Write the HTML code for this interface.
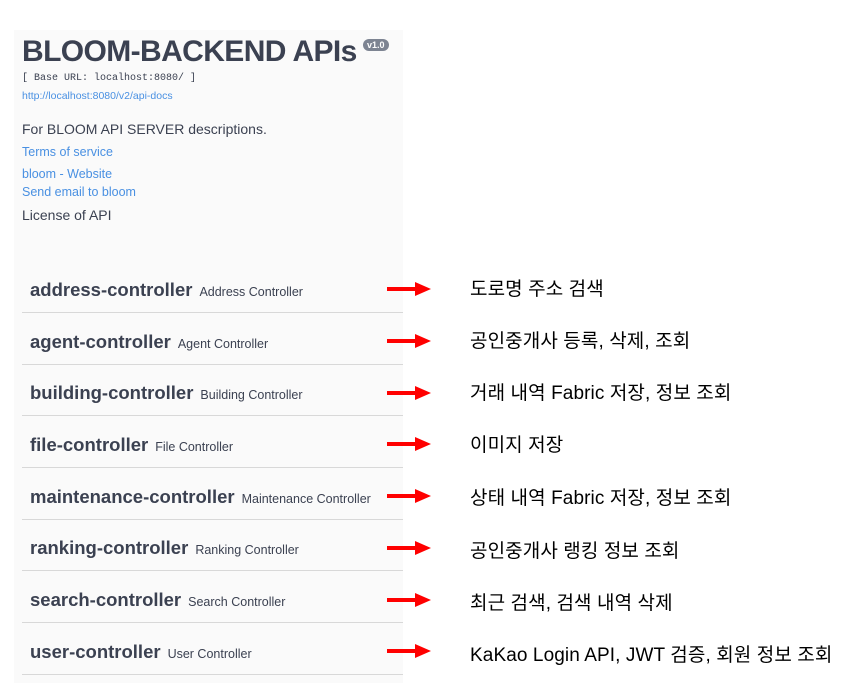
<!DOCTYPE html>
<html><head><meta charset="utf-8"><style>
body{margin:0;width:859px;height:695px;background:#fff;position:relative;overflow:hidden;font-family:"Liberation Sans","Noto Sans CJK KR",sans-serif}
.panel{position:absolute;left:14px;top:30px;width:389px;height:653px;background:#fafafa}
.abs{position:absolute;white-space:nowrap}
h1{position:absolute;left:22px;top:35px;margin:0;font-size:30px;font-weight:bold;color:#3b4151;letter-spacing:-0.6px;white-space:nowrap}
.ver{position:absolute;left:363px;top:39px;background:#7d8492;color:#fff;font-size:9px;font-weight:bold;border-radius:8px;padding:1px 4px}
a{color:#4990e2}
.row{position:absolute;left:22px;width:381px;height:51px;border-bottom:1px solid #d8d8d8}
.row b{position:absolute;left:8px;top:18px;font-size:18.5px;color:#3b4151;white-space:nowrap}
.row span{font-size:12.5px;color:#3b4151;margin-left:7px;font-weight:normal}
.arr{position:absolute;left:387px;width:44px;height:14px}
.ko{position:absolute;left:470px;font-size:19px;color:#000;white-space:nowrap;letter-spacing:0.1px}
</style></head><body>
<div class="panel"></div>
<h1>BLOOM-BACKEND APIs</h1><div class="ver">v1.0</div>
<div class="abs" style="left:22px;top:73px;font-family:'Liberation Mono',monospace;font-size:10px;color:#3b4151">[ Base URL: localhost:8080/ ]</div>
<div class="abs" style="left:22px;top:90px;font-size:10.5px"><a>http://localhost:8080/v2/api-docs</a></div>
<div class="abs" style="left:22px;top:121px;font-size:14px;color:#3b4151">For BLOOM API SERVER descriptions.</div>
<div class="abs" style="left:22px;top:145px;font-size:12.5px"><a>Terms of service</a></div>
<div class="abs" style="left:22px;top:167px;font-size:12.5px"><a>bloom - Website</a></div>
<div class="abs" style="left:22px;top:185px;font-size:12.5px"><a>Send email to bloom</a></div>
<div class="abs" style="left:22px;top:207px;font-size:14px;color:#3b4151">License of API</div>

<div class="row" style="top:261px"><b>address-controller<span>Address Controller</span></b></div>
<div class="row" style="top:313px"><b>agent-controller<span>Agent Controller</span></b></div>
<div class="row" style="top:364px"><b>building-controller<span>Building Controller</span></b></div>
<div class="row" style="top:416px"><b>file-controller<span>File Controller</span></b></div>
<div class="row" style="top:468px"><b>maintenance-controller<span>Maintenance Controller</span></b></div>
<div class="row" style="top:519px"><b>ranking-controller<span>Ranking Controller</span></b></div>
<div class="row" style="top:571px"><b>search-controller<span>Search Controller</span></b></div>
<div class="row" style="top:623px"><b>user-controller<span>User Controller</span></b></div>

<svg width="0" height="0" style="position:absolute"><defs><g id="a"><rect x="0" y="5" width="30" height="4" fill="#f00"/><polygon points="28,0 44,7 28,14" fill="#f00"/></g></defs></svg>
<svg class="arr" style="top:282px"><use href="#a"/></svg>
<svg class="arr" style="top:334px"><use href="#a"/></svg>
<svg class="arr" style="top:386px"><use href="#a"/></svg>
<svg class="arr" style="top:437px"><use href="#a"/></svg>
<svg class="arr" style="top:489px"><use href="#a"/></svg>
<svg class="arr" style="top:541px"><use href="#a"/></svg>
<svg class="arr" style="top:593px"><use href="#a"/></svg>
<svg class="arr" style="top:644px"><use href="#a"/></svg>

<div class="ko" style="top:274px">도로명 주소 검색</div>
<div class="ko" style="top:326px">공인중개사 등록, 삭제, 조회</div>
<div class="ko" style="top:378px">거래 내역 Fabric 저장, 정보 조회</div>
<div class="ko" style="top:430px">이미지 저장</div>
<div class="ko" style="top:483px">상태 내역 Fabric 저장, 정보 조회</div>
<div class="ko" style="top:536px">공인중개사 랭킹 정보 조회</div>
<div class="ko" style="top:588px">최근 검색, 검색 내역 삭제</div>
<div class="ko" style="top:640px">KaKao Login API, JWT 검증, 회원 정보 조회</div>
</body></html>
